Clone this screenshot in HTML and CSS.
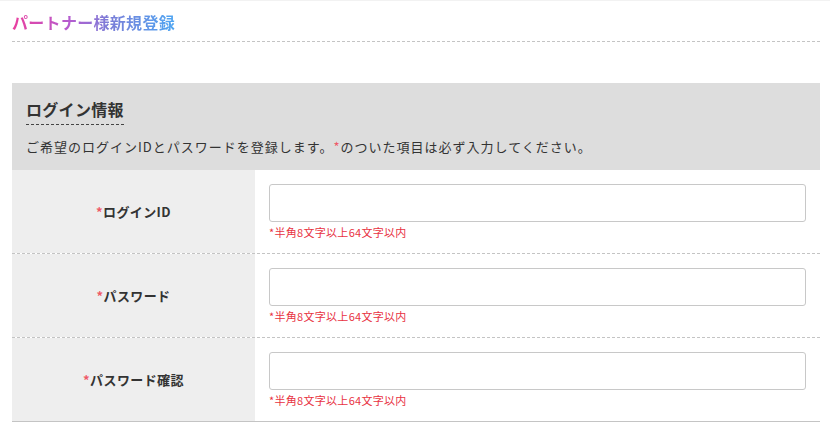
FILE: index.html
```html
<!DOCTYPE html>
<html lang="ja">
<head>
<meta charset="utf-8">
<title>パートナー様新規登録</title>
<link rel="stylesheet" href="styles.css">
</head>
<body>
<div class="page">
  <header class="page-head">
    <h1 class="page-title">パートナー様新規登録</h1>
  </header>

  <section class="panel">
    <div class="panel-head">
      <h2 class="panel-title">ログイン情報</h2>
      <p class="panel-desc">ご希望のログインIDとパスワードを登録します。<span class="req">*</span>のついた項目は必ず入力してください。</p>
    </div>

    <div class="form">
      <div class="row">
        <div class="label"><span class="req">*</span>ログインID</div>
        <div class="field">
          <input class="input" type="text">
          <p class="hint">*半角8文字以上64文字以内</p>
        </div>
      </div>
      <div class="row">
        <div class="label"><span class="req">*</span>パスワード</div>
        <div class="field">
          <input class="input" type="password">
          <p class="hint">*半角8文字以上64文字以内</p>
        </div>
      </div>
      <div class="row row-last">
        <div class="label"><span class="req">*</span>パスワード確認</div>
        <div class="field">
          <input class="input" type="password">
          <p class="hint">*半角8文字以上64文字以内</p>
        </div>
      </div>
    </div>
  </section>
</div>
</body>
</html>
```

FILE: styles.css
```css
html, body {
  margin: 0;
  padding: 0;
  background: #ffffff;
}
body {
  font-family: "Noto Sans CJK JP", "Noto Sans", sans-serif;
  color: #333333;
  border-top: 1px solid #f2f2f2;
}
.page {
  margin: 0 10px 0 12px;
}
.page-head {
  padding: 9px 0 7px;
  border-bottom: 1px dashed #c4c4c4;
}
.page-title {
  margin: 0;
  font-size: 16px;
  line-height: 24px;
  font-weight: 700;
  letter-spacing: 0.3px;
  display: inline-block;
  background: linear-gradient(90deg, #ea3f9f 0%, #b55ccf 35%, #7a7ed8 60%, #4fa6f2 100%);
  -webkit-background-clip: text;
  background-clip: text;
  color: transparent;
}
.panel {
  margin-top: 41px;
}
.panel-head {
  background: #dddddd;
  padding: 14px 14px 13px;
}
.panel-title {
  display: inline-block;
  margin: 0;
  font-size: 16px;
  line-height: 20px;
  font-weight: 700;
  letter-spacing: 0.3px;
  color: #333333;
  padding-bottom: 5px;
  border-bottom: 1px dashed #444444;
}
.panel-desc {
  margin: 12px 0 0;
  font-size: 13px;
  line-height: 20px;
  letter-spacing: 1px;
  color: #333333;
}
.req {
  color: #ee5a68;
}
.row {
  display: grid;
  grid-template-columns: 243px 1fr;
  border-bottom: 1px dashed #c4c4c4;
}
.row-last {
  border-bottom: 1px solid #c4c4c4;
}
.label {
  background: #eeeeee;
  display: flex;
  align-items: center;
  justify-content: center;
  font-size: 13px;
  font-weight: 700;
  letter-spacing: 0.4px;
  color: #333333;
}
.field {
  padding: 14px 14px 14px 14px;
}
.input {
  display: block;
  box-sizing: border-box;
  width: 100%;
  height: 38px;
  margin: 0;
  border: 1px solid #c8c8c8;
  border-radius: 3px;
  background: #ffffff;
  font: inherit;
}
.hint {
  margin: 3px 0 0;
  font-size: 11px;
  line-height: 14px;
  letter-spacing: 0.3px;
  color: #e8323f;
}
```
